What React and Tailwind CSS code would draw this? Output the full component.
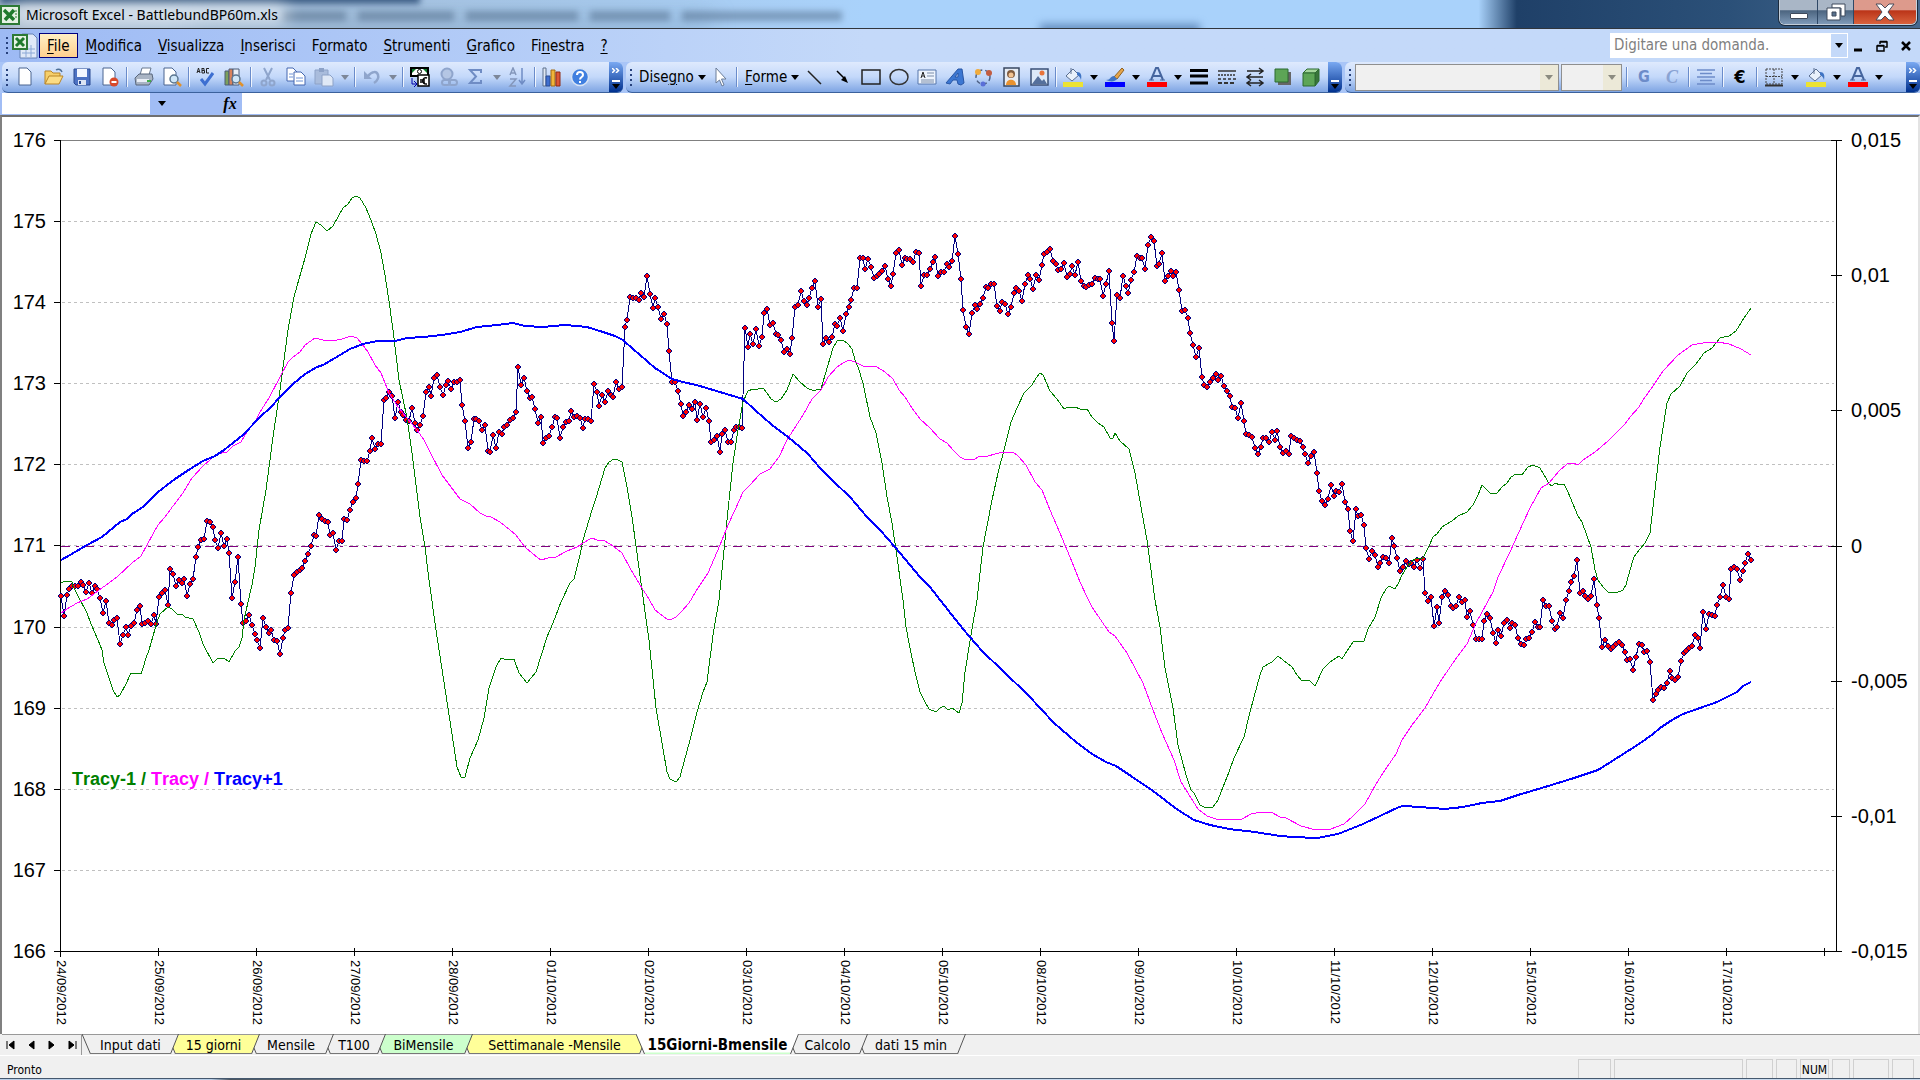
import clsx from 'clsx';

const MENU = [
  ['', 'F', 'ile'],
  ['', 'M', 'odifica'],
  ['', 'V', 'isualizza'],
  ['', 'I', 'nserisci'],
  ['F', 'o', 'rmato'],
  ['', 'S', 'trumenti'],
  ['', 'G', 'rafico'],
  ['Fi', 'n', 'estra'],
  ['', '?', ''],
];

const SHEETS = [
  { name: 'Input dati', width: 'w-[97px]', fill: '#f0f0f0' },
  { name: '15 giorni', width: 'w-[93px]', fill: '#ffff99' },
  { name: 'Mensile', width: 'w-[86px]', fill: '#f0f0f0' },
  { name: 'T100', width: 'w-[64px]', fill: '#f0f0f0' },
  { name: 'BiMensile', width: 'w-[99px]', fill: '#ccffcc' },
  { name: 'Settimanale -Mensile', width: 'w-[187px]', fill: '#ffff99' },
  { name: '15Giorni-Bmensile', width: 'w-[163px]', fill: '#ffffff', active: true },
  { name: 'Calcolo', width: 'w-[81px]', fill: '#f0f0f0' },
  { name: 'dati 15 min', width: 'w-[110px]', fill: '#f0f0f0' },
];

const DATES = [
  '24/09/2012', '25/09/2012', '26/09/2012', '27/09/2012', '28/09/2012', '01/10/2012',
  '02/10/2012', '03/10/2012', '04/10/2012', '05/10/2012', '08/10/2012', '09/10/2012',
  '10/10/2012', '11/10/2012', '12/10/2012', '15/10/2012', '16/10/2012', '17/10/2012',
];

// rows of the left scale, 176 down to 166
const LEVELS = [140, 221, 302, 383, 464, 545, 627, 708, 789, 870, 951];

const RIGHT_LABELS = ['0,015', '0,01', '0,005', '0', '-0,005', '-0,01', '-0,015'];

// hourly closes, evenly spaced between from and to
const PRICE = [
  {
    from: 61,
    to: 437,
    y: [
      596, 616, 595, 589, 586, 586, 586, 582, 585, 592, 583, 593, 586, 589, 598, 613, 601, 623, 625, 620, 618, 644, 635, 627, 635,
      626, 623, 610, 606, 624, 623, 621, 624, 615, 624, 597, 593, 590, 605, 569, 574, 586, 580, 583, 579, 596, 584, 579, 557, 547,
      540, 539, 521, 522, 527, 540, 548, 533, 546, 539, 553, 598, 582, 557, 604, 623, 621, 615, 625, 634, 640, 648, 618, 627, 633,
      630, 640, 641, 654, 638, 630, 628, 593, 575, 572, 570, 568, 561, 554, 546, 535, 536, 515, 519, 521, 522, 535, 533, 550, 541,
      541, 519, 520, 510, 502, 498, 484, 460, 461, 461, 451, 438, 449, 444, 444, 400, 398, 392, 396, 418, 402, 412, 415, 420, 421,
      408, 423, 430, 425, 416, 392, 387, 396, 378, 375,
    ],
  },
  {
    from: 440,
    to: 798,
    y: [
      387, 395, 385, 381, 389, 382, 382, 380, 405, 421, 448, 442, 419, 419, 421, 430, 425, 451, 452, 435, 448, 432, 434, 427, 425,
      420, 418, 412, 367, 385, 378, 391, 398, 397, 409, 423, 417, 443, 438, 436, 427, 417, 418, 438, 427, 422, 421, 411, 417, 416,
      418, 428, 419, 419, 421, 384, 392, 406, 395, 402, 391, 395, 397, 382, 389, 387, 327, 320, 297, 298, 298, 300, 293, 297, 276,
      294, 308, 298, 307, 319, 314, 324, 351, 382, 382, 391, 404, 416, 412, 405, 409, 402, 420, 404, 417, 408, 421, 442, 440, 436,
      452, 434, 430, 442, 442, 430, 427, 427, 428, 328, 347, 334, 344, 329, 346, 337, 313, 309, 325, 323, 334, 335, 340, 352, 349,
      354, 338, 307, 305,
    ],
  },
  {
    from: 801,
    to: 1148,
    y: [
      291, 301, 305, 298, 288, 281, 307, 299, 344, 338, 342, 337, 324, 326, 318, 331, 314, 307, 300, 288, 288, 258, 258, 269, 259,
      267, 278, 276, 274, 271, 266, 279, 286, 274, 253, 250, 265, 258, 259, 259, 262, 252, 253, 286, 275, 275, 269, 262, 257, 276,
      272, 272, 264, 267, 261, 236, 254, 279, 310, 327, 334, 313, 305, 309, 304, 298, 287, 288, 284, 284, 306, 311, 302, 304, 314,
      307, 293, 288, 291, 301, 284, 275, 279, 289, 275, 280, 265, 254, 252, 249, 261, 264, 270, 269, 263, 277, 274, 266, 275, 262,
      281, 286, 287, 285, 284, 278, 279, 279, 296, 284, 271, 323, 341, 295, 298, 276, 286, 293, 280, 272, 256, 258, 258, 269, 245,
    ],
  },
  {
    from: 1151,
    to: 1356,
    y: [
      237, 241, 266, 264, 253, 281, 276, 271, 276, 272, 290, 311, 310, 318, 333, 345, 357, 348, 377, 385, 387, 382, 378, 374, 380,
      376, 386, 391, 396, 407, 408, 418, 403, 421, 434, 435, 437, 448, 454, 447, 438, 438, 442, 432, 440, 431, 447, 453, 451, 454,
      436, 438, 440, 441, 447, 454, 463, 456, 452, 473, 491, 501, 505, 499, 485, 496, 491, 492, 484, 502, 509, 531, 541, 509,
    ],
  },
  {
    from: 1358,
    to: 1751,
    y: [
      516, 515, 525, 548, 559, 551, 555, 567, 563, 557, 558, 563, 538, 546, 558, 571, 567, 561, 564, 563, 567, 560, 568, 559, 593,
      601, 597, 626, 607, 623, 597, 591, 595, 606, 608, 606, 597, 602, 600, 617, 611, 625, 639, 639, 639, 621, 614, 618, 633, 643,
      630, 636, 623, 620, 628, 623, 625, 638, 644, 645, 639, 638, 632, 622, 627, 627, 600, 606, 606, 621, 629, 627, 613, 618, 600,
      591, 582, 576, 560, 593, 591, 596, 599, 596, 579, 605, 618, 647, 640, 646, 649, 647, 644, 642, 645, 652, 660, 659, 670, 657,
      644, 645, 652, 651, 662, 700, 694, 690, 687, 688, 683, 671, 678, 680, 677, 661, 653, 651, 648, 646, 635, 638, 648, 612, 629,
      614, 615, 616, 605, 597, 585, 597, 599, 569, 567, 569, 580, 571, 563, 554, 560,
    ],
  },
];

const CLOSES = PRICE.flatMap(({ from, to, y }) =>
  y.map((value, i) => [Math.round(from + ((to - from) * i) / (y.length - 1)), value])
);

const TRACY_MINUS =
  '61,583 65,581 72,582 73,586 78,596 87,613 91,624 98,640 102,650 104,663 108,675 113,690 117,697 120,695 126,684 131,673 141,674 143,668 146,658 149,650 157,622 160,614 168,607 172,609 177,614 182,614 185,617 193,619 199,632 203,644 213,663 218,658 224,658 229,662 235,651 239,647 242,638 244,620 248,602 252,585 255,567 259,530 266,490 273,437 280,390 288,330 294,297 299,279 305,258 311,234 316,222 321,225 327,231 333,226 343,208 348,204 352,198 356,196 360,198 366,208 371,220 376,234 381,253 385,275 389,301 393,330 399,380 407,418 412,453 420,517 425,547 429,580 436,630 448,708 457,767 461,777 465,777 470,758 478,740 484,718 489,688 496,667 501,658 507,660 514,659 519,673 527,683 536,672 547,637 553,623 561,602 570,583 574,579 580,555 583,540 592,510 596,498 605,468 609,462 614,459 618,460 622,462 627,487 632,517 637,553 641,583 649,640 656,708 667,772 670,779 676,782 680,777 684,762 690,740 697,712 703,692 707,682 713,635 719,600 723,560 728,510 733,463 738,430 743,402 748,391 753,389 758,389 763,388 767,393 771,399 776,402 781,399 787,390 793,374 800,382 807,388 814,391 818,389 821,389 825,375 828,365 833,348 837,341 843,340 848,344 852,349 855,360 858,367 863,383 870,417 876,433 882,463 887,497 892,523 896,550 903,600 906,627 910,648 915,672 920,692 924,700 929,709 936,712 940,708 944,706 948,710 952,708 959,713 962,703 965,672 971,635 977,600 983,547 992,500 998,473 1004,450 1011,422 1017,408 1024,393 1032,385 1036,378 1040,373 1043,375 1050,391 1057,399 1064,409 1068,407 1075,407 1080,409 1087,409 1092,417 1098,423 1104,427 1110,438 1113,438 1115,433 1120,441 1129,449 1135,473 1141,507 1147,540 1155,600 1160,627 1165,668 1173,708 1178,745 1186,775 1191,790 1194,793 1200,805 1204,807 1213,807 1218,800 1223,787 1229,772 1234,758 1244,737 1250,712 1260,675 1263,667 1272,662 1278,656 1283,660 1292,667 1297,675 1302,681 1309,680 1315,686 1323,669 1330,662 1339,656 1342,659 1347,651 1353,642 1364,641 1368,629 1375,617 1381,598 1386,589 1389,586 1395,589 1398,584 1402,575 1407,567 1412,561 1417,558 1423,558 1429,546 1433,537 1437,534 1442,527 1452,521 1458,516 1467,512 1473,505 1478,495 1482,485 1490,493 1497,493 1502,487 1507,483 1511,477 1516,474 1522,475 1528,467 1533,465 1540,468 1547,480 1549,484 1552,486 1555,483 1560,485 1564,484 1568,492 1578,516 1582,522 1591,547 1595,570 1598,580 1603,587 1608,592 1616,593 1623,590 1626,585 1630,570 1634,557 1640,549 1645,543 1650,533 1655,490 1660,447 1667,403 1671,394 1680,386 1687,373 1696,364 1704,353 1712,348 1720,338 1729,336 1736,331 1744,318 1751,308';

const TRACY =
  '61,613 67,609 77,603 87,599 102,588 117,577 132,563 141,556 148,543 158,525 165,517 173,506 183,493 192,478 203,466 217,454 227,452 233,446 241,442 248,430 255,422 260,412 269,398 280,377 288,362 293,357 300,352 305,345 315,338 323,340 333,341 342,339 351,336 357,338 362,344 368,352 375,365 381,373 389,393 398,407 407,418 417,430 424,440 430,452 442,475 451,487 460,499 470,504 480,513 486,516 491,517 500,522 510,530 516,535 525,547 533,554 541,560 548,558 556,557 567,551 577,547 583,543 592,538 597,540 605,541 613,546 622,553 630,568 640,585 649,599 655,610 667,619 672,619 676,617 681,612 689,603 698,588 708,573 720,545 728,525 735,510 743,492 750,485 760,474 770,469 779,457 787,440 803,415 812,399 821,390 828,377 837,367 843,363 849,360 855,362 863,366 877,367 885,372 893,379 899,390 905,397 912,408 920,419 930,428 940,439 947,443 953,450 960,457 964,459 975,459 980,456 988,456 995,454 1003,452 1013,452 1018,456 1026,465 1035,482 1042,490 1050,510 1060,533 1070,557 1080,582 1088,599 1092,607 1109,632 1115,636 1127,653 1143,683 1153,710 1162,733 1174,760 1181,782 1191,798 1198,809 1207,816 1216,819 1229,819 1242,819 1251,814 1261,812 1271,812 1280,817 1286,818 1301,826 1316,830 1331,829 1344,824 1353,816 1365,804 1376,784 1385,770 1396,754 1402,740 1412,725 1425,708 1440,682 1457,657 1467,644 1476,623 1493,592 1498,577 1510,552 1523,523 1530,508 1541,488 1549,483 1559,471 1567,464 1573,463 1578,465 1583,460 1595,452 1608,441 1625,424 1630,417 1639,407 1643,400 1653,386 1663,371 1678,355 1692,345 1708,342 1718,342 1729,344 1741,349 1751,355';

const TRACY_PLUS =
  '61,560 70,555 87,545 102,537 120,522 127,519 132,514 143,507 158,492 175,479 190,469 203,461 215,456 224,450 243,435 260,417 270,408 280,397 293,384 305,374 317,367 323,365 335,358 350,349 363,344 377,341 395,341 407,338 423,337 442,335 460,332 477,327 497,325 513,323 525,326 542,327 565,325 587,327 603,332 615,336 623,340 633,349 640,355 655,368 672,379 683,382 700,386 723,393 743,399 755,410 772,425 788,437 800,447 808,454 820,468 833,481 850,497 867,517 880,530 895,547 905,559 920,577 930,587 948,610 963,629 982,651 1003,671 1028,695 1054,723 1076,742 1092,754 1106,762 1116,766 1128,774 1153,791 1178,810 1194,820 1210,825 1229,829 1255,832 1280,836 1293,837 1317,838 1338,834 1363,824 1399,807 1403,806 1420,807 1445,809 1463,807 1482,803 1500,801 1518,795 1545,787 1574,778 1598,770 1628,751 1642,742 1653,734 1660,728 1672,720 1683,714 1700,708 1717,702 1725,698 1737,692 1743,686 1751,682';

function Chart() {
  const tickX = (i) => Math.floor(60 + i * 98.05);

  return (
    <svg viewBox="2 117 1916 917" className="block h-auto w-full" fontFamily="'Liberation Sans', Arial, sans-serif" role="img" aria-label="BattlebundBP60m">
      <defs>
        <g id="marker" shapeRendering="crispEdges">
          <path d="M-1-3h2v1h1v1h1v2h-1v1h-1v1h-2v-1h-1v-1h-1v-2h1v-1h1z" fill="#000080" />
          <path d="M-1-2h2v1h1v2h-1v1h-2v-1h-1v-2h1z" fill="#ff0000" />
        </g>
      </defs>
      <g shapeRendering="crispEdges" fill="none">
        <path d="M61 140.500H1837" stroke="#808080" />
        {LEVELS.slice(1, 10).map((y) => (
          <path key={y} d={`M62 ${y + 0.5}H1834`} stroke="#c0c0c0" strokeDasharray="3 3" />
        ))}
        <path d="M61 546.500H1834" stroke="#800080" strokeDasharray="9 6 3 6" />
        <path d="M60.500 140V957M1836.500 140V952M54 951.500H1842" stroke="#000" />
        {LEVELS.map((y) => (
          <path key={y} d={`M54 ${y + 0.5}H61`} stroke="#000" />
        ))}
        {RIGHT_LABELS.map((label, i) => (
          <path key={label} d={`M1831 ${140.5 + Math.round(i * 135.2)}H1842`} stroke="#000" />
        ))}
        {Array.from({ length: 19 }, (_, i) => (
          <path key={i} d={`M${tickX(i) + 0.5} 948V956`} stroke="#000" />
        ))}
        <polyline points={CLOSES.map((p) => p.join(',')).join(' ')} stroke="#000080" />
      </g>
      {CLOSES.map(([x, y]) => (
        <use key={x} href="#marker" x={x} y={y} />
      ))}
      <g shapeRendering="crispEdges" fill="none">
        <polyline points={TRACY_MINUS} stroke="#008000" />
        <polyline points={TRACY} stroke="#ff00ff" />
        <polyline points={TRACY_PLUS} stroke="#0000ff" strokeWidth="2" />
      </g>
      <g fontSize="20" fill="#000">
        {LEVELS.map((y, i) => (
          <text key={y} x="46" y={y + 7} textAnchor="end">{176 - i}</text>
        ))}
        {RIGHT_LABELS.map((label, i) => (
          <text key={label} x="1851" y={147 + Math.round(i * 135.2)}>{label}</text>
        ))}
      </g>
      <g fontSize="13" fill="#000">
        {DATES.map((date, i) => (
          <text key={date} transform={`translate(${tickX(i) - 3} 960) rotate(90)`}>{date}</text>
        ))}
      </g>
      <text x="72" y="785" fontSize="18" fontWeight="bold" className="[font-kerning:none]">
        <tspan fill="#008000">Tracy-1 / </tspan>
        <tspan fill="#ff00ff">Tracy / </tspan>
        <tspan fill="#0000ff">Tracy+1</tspan>
      </text>
    </svg>
  );
}

const Page = ({ x = 3, y = 1, w = 12, h = 17, stroke = '#4a6590' }) => (
  <path d={`M${x} ${y}h${w - 4}l4 4v${h - 4}h-${w}z`} fill="#fff" stroke={stroke} />
);

const Lens = () => (
  <>
    <circle cx="12" cy="12" r="4" fill="#cfe6f7" stroke="#5b7690" strokeWidth="1.5" />
    <path d="m15 15 4 4" stroke="#e0912c" strokeWidth="2.5" />
  </>
);

const Bucket = () => (
  <>
    <path d="m3 9 7-7 6 6-7 6z" fill="#e9f1fb" stroke="#5b6f90" />
    <path d="M8 1v6" stroke="#5b6f90" />
    <path d="M14 5c4 0 5 3 4 8-1-3-2-4-4-5z" fill="#3f74c4" />
    <path d="M0 15h20v5H0z" fill="#ece233" />
  </>
);

const FontA = () => (
  <>
    <path d="M4 13 9 1h2l5 12M6 9h8" stroke="#45659e" strokeWidth="2" fill="none" />
    <path d="M2 13h5M13 13h5" stroke="#45659e" />
    <path d="M0 15h20v5H0z" fill="#f00" />
  </>
);

const ICONS = {
  newDoc: <Page />,
  open: (
    <>
      <path d="M1 17V4h6l2 2h7v4" fill="#f6cf6a" stroke="#b98527" />
      <path d="M1 17 5 9h14l-4 8z" fill="#fbdc84" stroke="#b98527" />
      <path d="M12 3c3-2 5 0 6 2" stroke="#4e7097" fill="none" strokeWidth="1.5" />
    </>
  ),
  save: (
    <>
      <path d="M2 2h16v16H4l-2-2z" fill="#4d72c3" stroke="#2a4a92" />
      <path d="M5 2h10v8H5z" fill="#f3f7ff" />
      <path d="M6 13h8v5H6z" fill="#dbe4f3" />
      <path d="M7 14h2v3H7z" fill="#2a4a92" />
    </>
  ),
  permission: (
    <>
      <Page />
      <circle cx="14" cy="15" r="4.500" fill="#d9492a" />
      <path d="M11.500 15h5" stroke="#fff" strokeWidth="1.800" />
    </>
  ),
  print: (
    <>
      <path d="M6 8 8 1h9l-2 7z" fill="#fff" stroke="#68788f" />
      <path d="m1 11 4-4h13l1 5-4 6H2z" fill="#a9b4c4" stroke="#59677c" />
      <path d="M3 12h12v3H3z" fill="#e9eef6" />
      <path d="M13 13h4v2h-4z" fill="#3fae49" />
    </>
  ),
  preview: (
    <>
      <Page x={2} />
      <Lens />
    </>
  ),
  spelling: (
    <>
      <path d="M1 6l1.500-5L4 6M1.500 4.500h2M6 1v5M6 1.500h2v2H6h2.500V6H6M13 1.500h-2.500V6H13" fill="none" stroke="#222" />
      <path d="m5 12 4 5 8-11" fill="none" stroke="#3d6fd1" strokeWidth="3" />
    </>
  ),
  research: (
    <>
      <path d="M1 4h4v14H1z" fill="#7ba05b" stroke="#4d5d77" />
      <path d="M5 2h4v16H5z" fill="#d9825b" stroke="#4d5d77" />
      <path d="M9 2h6v16H9z" fill="#e9eef6" stroke="#4d5d77" />
      <Lens />
    </>
  ),
  cut: (
    <g stroke="#8fa5cc" fill="none" strokeWidth="2">
      <path d="m6 1 6 12M14 1 8 13" />
      <circle cx="6" cy="16" r="2.500" />
      <circle cx="14" cy="16" r="2.500" />
    </g>
  ),
  copy: (
    <>
      <Page x={1} w={10} h={13} stroke="#4467b0" />
      <Page x={8} y={5} w={11} h={13} stroke="#4467b0" />
      <path d="M3 7h4M3 10h4M10 11h7M10 14h7" stroke="#6f93d6" />
    </>
  ),
  paste: (
    <>
      <path d="M1 3h13v14H1z" fill="#a9bcdc" stroke="#8da2c7" />
      <path d="M5 1h5v4H5z" fill="#8da2c7" />
      <path d="M8 8h8l3 3v8H8z" fill="#dfe8f6" stroke="#8da2c7" />
    </>
  ),
  undo: (
    <>
      <path d="M6 9c4-5 9-5 10-1 1 3-1 6-4 8" fill="none" stroke="#8fa5cc" strokeWidth="2.500" />
      <path d="M2 4v8h8z" fill="#8fa5cc" />
    </>
  ),
  euroConvert: (
    <>
      <path d="M1 1h17v8H1z" fill="#fff" stroke="#000" strokeWidth="2" />
      <path d="M2 2h4L2 6zM17 2h-4l4 4z" fill="#0a7a2a" />
      <circle cx="9.500" cy="4.500" r="2" fill="none" stroke="#000" />
      <path d="M8 8h11v11H8z" fill="#fff" stroke="#000" strokeWidth="1.500" />
      <path d="M17 11c-5-2-6 7 0 6M10 13h5M10 15h5" stroke="#000" fill="none" strokeWidth="1.500" />
      <path d="M2 11v6h4M4 14l3 3-3 3" stroke="#00a" fill="none" />
    </>
  ),
  link: (
    <g fill="none" stroke="#8fa5cc" strokeWidth="2">
      <circle cx="9" cy="7" r="5.500" fill="#b4c6e4" />
      <rect x="4" y="13" width="8" height="5" rx="2.500" />
      <rect x="11" y="13" width="8" height="5" rx="2.500" />
    </g>
  ),
  sum: <path d="M15 6V3H4l6 6.500L4 16h11v-3" fill="none" stroke="#6f8cc4" strokeWidth="2" />,
  sort: (
    <>
      <path d="m2 8 3-7 3 7M3 6h4M2 12h6l-6 7h6" fill="none" stroke="#8497bb" strokeWidth="1.500" />
      <path d="M14 1v16m-3-4 3 4 3-4" fill="none" stroke="#6f8cc4" strokeWidth="1.500" />
    </>
  ),
  chart: (
    <>
      <path d="M1 1h3v18H1z" fill="#dfe7f2" stroke="#5d708d" />
      <path d="M4 9h4v10H4z" fill="#3f6fd0" stroke="#284a92" />
      <path d="M9 3h4v16H9z" fill="#f0b53a" stroke="#a46a13" />
      <path d="M14 5h4v14h-4z" fill="#dd5637" stroke="#8d2a15" />
    </>
  ),
  help: (
    <>
      <circle cx="10" cy="10" r="8.500" fill="#3f7fe0" stroke="#d5e2f4" strokeWidth="1.500" />
      <path d="M7 8c0-4 6-4 6 0 0 2-3 2-3 4.500M10 14v2" fill="none" stroke="#fff" strokeWidth="2" />
    </>
  ),
  pointer: <path d="M6 1v15l3.500-3 2.500 6 2-1-2.500-6H16z" fill="#fff" stroke="#6a7c98" />,
  line: <path d="m3 4 13 13" stroke="#222" strokeWidth="1.500" />,
  arrow: (
    <>
      <path d="m4 4 7 7" stroke="#000" strokeWidth="1.500" />
      <path d="m15 16-7-3 4-4z" fill="#000" />
    </>
  ),
  rect: <path d="M1 3h18v14H1z" fill="none" stroke="#222" strokeWidth="1.500" />,
  oval: <ellipse cx="10" cy="10" rx="9" ry="7.500" fill="none" stroke="#333" strokeWidth="1.500" />,
  textBox: (
    <>
      <path d="M1 3h18v14H1z" fill="#eef4fd" stroke="#5776ab" />
      <path d="m4 11 2-6 2 6M5 9h2" fill="none" stroke="#222" />
      <path d="M10 6h7M10 9h7M4 13h13M4 15h13" stroke="#7b8ca8" />
    </>
  ),
  wordArt: <path d="m1 16 12-14h4l2 14-3 2-3-1-1-4H8l-3 4zM10 10h3V6z" fill="#3c77d2" fillRule="evenodd" stroke="#2956a5" />,
  diagram: (
    <>
      <circle cx="10" cy="10" r="7" fill="none" stroke="#4d6184" strokeWidth="1.500" strokeDasharray="4 3" />
      <circle cx="5" cy="5" r="3" fill="#f0ab3c" />
      <circle cx="16" cy="6" r="3" fill="#c25c40" />
      <circle cx="10" cy="17" r="2.500" fill="#5a6fd8" />
    </>
  ),
  clipArt: (
    <>
      <path d="M3 1h15v18H3z" fill="#e7ecf4" stroke="#3a4860" strokeWidth="1.500" />
      <circle cx="10" cy="7" r="4" fill="#805b3d" />
      <circle cx="10" cy="8" r="2.500" fill="#f3c391" />
      <path d="M5 18c0-7 10-7 10 0z" fill="#e9922f" />
    </>
  ),
  picture: (
    <>
      <path d="M2 2h17v16H2z" fill="#dce9f8" stroke="#3a4f75" strokeWidth="1.500" />
      <circle cx="13" cy="6" r="2.500" fill="#e8743a" />
      <path d="m3 17 6-8 4 5 2-2 3 5z" fill="#55709c" />
    </>
  ),
  fill: <Bucket />,
  lineColor: (
    <>
      <path d="m9 10 8-9 2 2-7 9z" fill="#e6a54a" stroke="#8f6120" />
      <path d="M1 13c5 0 4-4 8-4l3 3c-2 3-7 3-11 1z" fill="#3f74c4" />
      <path d="M0 15h20v5H0z" fill="#00f" />
    </>
  ),
  fontColor: <FontA />,
  lineStyle: <path d="M1 3.500h18M1 9h18M1 16h18" stroke="#000" strokeWidth="3" />,
  dashStyle: (
    <g stroke="#333" strokeWidth="1.500">
      <path d="M1 4h18" />
      <path d="M1 8h18" strokeDasharray="2 1" />
      <path d="M1 12h18" strokeDasharray="3 2" />
      <path d="M1 16h18" strokeDasharray="4 2" strokeWidth="2" />
    </g>
  ),
  arrowStyle: <path d="M2 4h15m-3-3 4 3-4 3M18 10H3m3-3-4 3 4 3M3 16h14m-3-3 4 3-4 3M6 13l-4 3 4 3" fill="none" stroke="#222" strokeWidth="1.500" />,
  shadow: (
    <>
      <path d="M5 5h13v13H5z" fill="#666" />
      <path d="M2 2h13v13H2z" fill="#5da556" stroke="#2c6b31" />
    </>
  ),
  cube: (
    <>
      <path d="m2 6 4-4h12l-4 4z" fill="#a4d69b" stroke="#2c6b31" />
      <path d="m14 6 4-4v12l-4 5z" fill="#38753a" stroke="#2c6b31" />
      <path d="M2 6h12v13H2z" fill="#5da556" stroke="#2c6b31" />
    </>
  ),
  center: <path d="M1 3h18M4 6.500h12M1 10h18M4 13.500h12M1 17h18" stroke="#6d8cc9" strokeWidth="1.500" />,
  borders: (
    <>
      <path d="M2 2h16v15H2zM10 2v15M2 9.500h16" fill="none" stroke="#444" strokeDasharray="2 1" />
      <path d="M1 18.500h18" stroke="#333" strokeWidth="2" />
    </>
  ),
};

function ToolButton({ icon, label }) {
  return (
    <button type="button" aria-label={label ?? icon} className="flex w-7 shrink-0 items-center justify-center">
      <svg viewBox="0 0 20 20" className="size-5">{ICONS[icon]}</svg>
    </button>
  );
}

function Triangle({ className }) {
  return (
    <svg viewBox="0 0 8 5" className={clsx('h-[5px] w-2 shrink-0', className)}>
      <path d="M0 0h8L4 5z" fill="currentColor" />
    </svg>
  );
}

function Drop({ disabled }) {
  return (
    <button type="button" aria-label="Altre opzioni" className="flex w-3.5 shrink-0 items-center justify-center">
      <Triangle className={disabled ? 'text-[#7d8798]' : 'text-black'} />
    </button>
  );
}

const Divider = () => <div className="mx-[2px] h-5 w-[2px] shrink-0 self-center border-l border-[#6a8ccb] bg-white/80" />;

function Grip() {
  return (
    <div className="flex w-2.5 shrink-0 flex-col items-center justify-center gap-[3px]">
      {[0, 1, 2, 3].map((i) => (
        <span key={i} className="size-[2px] bg-[#27417c]" />
      ))}
    </div>
  );
}

function Tools({ items }) {
  return items.map((item, i) => {
    if (item === '|') return <Divider key={i} />;
    if (item === 'v') return <Drop key={i} />;
    if (item === 'x') return <Drop key={i} disabled />;
    return <ToolButton key={i} icon={item} />;
  });
}

function Toolbar({ label, className, more = true, children }) {
  return (
    <div
      role="toolbar"
      aria-label={label}
      className={clsx('flex overflow-hidden rounded-md border-b border-[#3b619c] bg-linear-to-b from-[#dfeafd] via-[#c3d8fa] to-[#7fa5e3]', className)}
    >
      <Grip />
      {children}
      <button
        type="button"
        aria-label="Opzioni barra degli strumenti"
        className="ml-auto flex w-3.5 shrink-0 flex-col items-center justify-between bg-linear-to-b from-[#7aa9f2] to-[#00308f] pt-1.5 pb-[3px] text-white"
      >
        <svg viewBox="0 0 8 5" className="h-[5px] w-2">
          {more && <path d="m0 0 2.500 2.500L0 5M4 0l2.500 2.500L4 5" fill="none" stroke="#fff" strokeWidth="1.500" />}
        </svg>
        <span className="flex flex-col items-center gap-[2px]">
          <span className="h-[2px] w-2 bg-white" />
          <Triangle className="text-black" />
        </span>
      </button>
    </div>
  );
}

function DisabledSelect({ label, className }) {
  return (
    <div className={clsx('flex h-[27px] shrink-0 self-center border border-[#8f8f8f] bg-[#f0f0f0]', className)}>
      <select aria-label={label} disabled className="min-w-0 flex-1 appearance-none" />
      <span className="flex w-[18px] items-center justify-center bg-[#ece9d8]">
        <Triangle className="text-[#8b8b80]" />
      </span>
    </div>
  );
}

function ExcelLogo({ className }) {
  return (
    <svg viewBox="0 0 20 20" className={className}>
      <path d="M1 1h18v18H1z" fill="#e5f2e4" stroke="#2d7a35" strokeWidth="2" />
      <path d="m4 5 10 10M14 5 5 15" stroke="#1f7a2d" strokeWidth="3.500" />
      <path d="M15 6h2M15 9h2M15 12h2" stroke="#2d7a35" />
    </svg>
  );
}

function TitleBar() {
  return (
    <header className="relative flex h-[29px] overflow-hidden border-b border-[#30353c] bg-linear-to-r from-[#a5b8cc] from-0% via-[#a9d2fb] via-45% to-[#a9d2fb]">
      <div className="absolute inset-0 bg-[linear-gradient(90deg,transparent_77%,#1f4068_79%,#2b5078_90%,#46698f_100%)]" />
      <div className="absolute -top-2 left-0 h-3 w-[420px] bg-[#3e5f86] blur-[3px]" />
      <div className="absolute top-4 left-48 h-4 w-[520px] bg-[#6a8cb0]/40 blur-md" />
      <div className="absolute top-6 left-[1040px] h-3 w-40 bg-[#38629a]/60 blur-xs" />
      <div className="absolute top-[11px] left-[282px] flex h-2.5 gap-3 blur-[3px]">
        <span className="w-16 bg-[#4f6a88]/50" />
        <span className="w-24 bg-[#4f6a88]/50" />
        <span className="w-28 bg-[#4f6a88]/50" />
        <span className="w-20 bg-[#4f6a88]/50" />
        <span className="w-40 bg-[#4f6a88]/50" />
      </div>
      <div className="absolute top-1 left-3 h-5 w-[276px] rounded-full bg-white/60 blur-sm" />
      <div className="relative flex items-center gap-1.5 pt-px text-black">
        <ExcelLogo className="size-5" />
        <h1 className="font-['Noto_Sans',sans-serif] text-sm">Microsoft Excel - BattlebundBP60m.xls</h1>
      </div>
      <div className="relative mr-[3px] ml-auto flex h-[25px] overflow-hidden rounded-b-md border border-t-0 border-white/70 shadow-[0_0_0_1px_#1c2b3d]">
        <button type="button" aria-label="Riduci a icona" className="flex w-[38px] items-end justify-center border-r border-[#2f4866] bg-linear-to-b from-[#a9b6c6] from-40% via-[#4c6580] via-45% to-[#7f9ab8] pb-[5px]">
          <span className="h-[6px] w-[18px] rounded-[1px] border border-[#3e4a5c] bg-white" />
        </button>
        <button type="button" aria-label="Ripristina" className="flex w-9 items-center justify-center border-r border-[#2f4866] bg-linear-to-b from-[#a9b6c6] from-40% via-[#4c6580] via-45% to-[#7f9ab8]">
          <svg viewBox="0 0 20 18" className="h-[18px] w-5">
            <path d="M6 1h13v12h-4V5H6z" fill="#fff" stroke="#3e4a5c" />
            <path d="M1 5h13v12H1zM6 9v4h4V9z" fill="#fff" fillRule="evenodd" stroke="#3e4a5c" />
          </svg>
        </button>
        <button type="button" aria-label="Chiudi" className="flex w-[62px] items-center justify-center bg-linear-to-b from-[#dd9a8c] from-40% via-[#bb3418] via-45% to-[#d9613c]">
          <svg viewBox="0 0 20 18" className="h-[18px] w-5">
            <path d="M1 1h5l4 4 4-4h5l-6 8 6 8h-5l-4-4-4 4H1l6-8z" fill="#fff" stroke="#4b4b58" />
          </svg>
        </button>
      </div>
    </header>
  );
}

function MenuBar() {
  return (
    <div className="flex h-[33px] items-center bg-linear-to-r from-[#9dbaf4] to-[#c4d9f9] to-45% pl-[2px] text-[15px]">
      <Grip />
      <svg viewBox="0 0 26 26" className="mr-px size-[26px]">
        <path d="M10 1h11l4 4v20H8V14z" fill="#dfe9f8" stroke="#6683b5" />
        <path d="M10 20h13M10 16h13M14 12v12M19 12v12" stroke="#8ba8d6" />
        <path d="M1 2h14v14H1z" fill="#e5f2e4" stroke="#2d7a35" strokeWidth="2" />
        <path d="m4 5 8 8M12 5l-8 8" stroke="#1f7a2d" strokeWidth="3" />
      </svg>
      <nav className="flex">
        {MENU.map(([before, key, after], i) => (
          <button
            key={i}
            type="button"
            className={clsx('h-[25px] border px-[7px] pt-px', i === 0 ? 'border-[#000080] bg-linear-to-b from-[#ffefc4] to-[#ffd08e]' : 'border-transparent')}
          >
            {before}
            <span className="underline underline-offset-2">{key}</span>
            {after}
          </button>
        ))}
      </nav>
      <div className="ml-auto flex h-[25px] w-[238px] border border-white bg-white">
        <input type="text" aria-label="Digitare una domanda" placeholder="Digitare una domanda." className="min-w-0 flex-1 px-[3px] placeholder:text-[#808080]" />
        <button type="button" aria-label="Domande recenti" className="flex w-4 items-center justify-center bg-[#c4d9f9]">
          <Triangle />
        </button>
      </div>
      <div className="mr-2 ml-1 flex items-center gap-3">
        <button type="button" aria-label="Riduci cartella">
          <svg viewBox="0 0 12 12" className="size-3"><path d="M2 10h8" stroke="#000" strokeWidth="3" /></svg>
        </button>
        <button type="button" aria-label="Ripristina cartella">
          <svg viewBox="0 0 12 12" className="size-3"><path d="M4 4V2h7v5H9M1 6h7v5H1zM4 1.500h7M1 5.500h7" fill="none" stroke="#000" strokeWidth="1.500" /></svg>
        </button>
        <button type="button" aria-label="Chiudi cartella">
          <svg viewBox="0 0 12 12" className="size-3"><path d="m2 2 8 8M10 2l-8 8" stroke="#000" strokeWidth="2.500" /></svg>
        </button>
      </div>
    </div>
  );
}

function Toolbars() {
  return (
    <div className="flex h-[31px] items-stretch gap-[3px] bg-[#a9c5f7] pl-[2px] text-[15px]">
      <Toolbar label="Standard" className="w-[621px] shrink-0">
        <Tools
          items={[
            'newDoc', 'open', 'save', 'permission', '|', 'print', 'preview', '|', 'spelling', 'research', '|',
            'cut', 'copy', 'paste', 'x', '|', 'undo', 'x', '|', 'euroConvert', 'link', 'sum', 'x', 'sort', '|', 'chart', 'help',
          ]}
        />
      </Toolbar>
      <Toolbar label="Disegno" className="w-[716px] shrink-0" more={false}>
        <button type="button" className="flex w-[70px] shrink-0 items-center gap-1 pl-[3px]">
          <span>Dise<u className="underline-offset-2">g</u>no</span>
          <Triangle />
        </button>
        <Tools items={['pointer', '|']} />
        <button type="button" className="flex w-[61px] shrink-0 items-center gap-1 pl-[5px]">
          <span><u className="underline-offset-2">F</u>orme</span>
          <Triangle />
        </button>
        <Tools
          items={[
            'line', 'arrow', 'rect', 'oval', 'textBox', 'wordArt', 'diagram', 'clipArt', 'picture', '|', 'fill', 'v',
            'lineColor', 'v', 'fontColor', 'v', 'lineStyle', 'dashStyle', 'arrowStyle', 'shadow', 'cube',
          ]}
        />
      </Toolbar>
      <Toolbar label="Formattazione" className="min-w-0 flex-1">
        <DisabledSelect label="Tipo di carattere" className="mr-[2px] w-[204px]" />
        <DisabledSelect label="Dimensione carattere" className="mr-[2px] w-[61px]" />
        <Divider />
        <button type="button" aria-label="Grassetto" className="w-7 shrink-0 text-base font-bold text-[#6d8cc9]">G</button>
        <button type="button" aria-label="Corsivo" className="w-7 shrink-0 font-['Liberation_Serif',serif] text-lg font-bold text-[#8aa3d3] italic">C</button>
        <Tools items={['|', 'center', '|']} />
        <button type="button" aria-label="Euro" className="w-7 shrink-0 text-lg font-bold">€</button>
        <Tools items={['|', 'borders', 'v', 'fill', 'v', 'fontColor', 'v']} />
      </Toolbar>
    </div>
  );
}

function FormulaBar() {
  return (
    <div className="flex h-[22px] bg-[#a1bdf5] pb-px pl-[2px]">
      <input type="text" aria-label="Casella nome" className="w-[148px] bg-white" />
      <button type="button" aria-label="Elenco nomi" className="flex w-6 items-center justify-center">
        <Triangle />
      </button>
      <button type="button" aria-label="Inserisci funzione" className="ml-11 w-6 font-['Liberation_Serif',serif] text-base leading-5 font-bold italic">fx</button>
      <input type="text" aria-label="Barra della formula" className="min-w-0 flex-1 bg-white" />
    </div>
  );
}

const NAV = [
  ['Primo foglio', 'M3 2v8M10 2v8L5 6z'],
  ['Foglio precedente', 'M9 2v8L4 6z'],
  ['Foglio successivo', 'M4 2v8l5-4z'],
  ['Ultimo foglio', 'M10 2v8M3 2v8l5-4z'],
];

// left and right slopes keep their width, the middle stretches with the tab
function TabShape({ fill, active }) {
  const top = active ? fill : '#999';
  const bottom = active ? '#ccffcc' : '#777';
  return (
    <span className="absolute inset-0 flex">
      <svg viewBox="0 0 9 20" className="h-5 w-[9px] shrink-0">
        <path d="M0 0h9v20z" fill={fill} />
        <path d="M0 .5h9" stroke={top} />
        <path d="m0 0 8.500 20" stroke="#555" />
      </svg>
      <svg viewBox="0 0 10 20" preserveAspectRatio="none" className="h-5 min-w-0 flex-1">
        <path d="M0 0h10v20H0z" fill={fill} />
        <path d="M0 .5h10" stroke={top} />
        <path d="M0 19.500h10" stroke={bottom} strokeWidth={active ? 2 : 1} />
      </svg>
      <svg viewBox="0 0 9 20" className="h-5 w-[9px] shrink-0">
        <path d="M0 0h9L0 20z" fill={fill} />
        <path d="M0 .5h9" stroke={top} />
        <path d="M8.500 0 .5 20" stroke="#555" />
      </svg>
    </span>
  );
}

function SheetTabs() {
  return (
    <div className="flex h-[22px] border-b border-white bg-[#f0f0f0] pl-[2px]">
      <div className="flex w-20 items-center justify-between border-t border-r border-[#999] pr-[3px] pl-[2px]">
        {NAV.map(([label, d]) => (
          <button key={label} type="button" aria-label={label}>
            <svg viewBox="0 0 12 12" className="size-3"><path d={d} fill="#000" stroke="#000" /></svg>
          </button>
        ))}
      </div>
      <div className="isolate flex flex-1 border-t border-[#999]">
        {SHEETS.map(({ name, width, fill, active }, i) => (
          <button
            key={name}
            type="button"
            className={clsx('relative -mt-px h-[21px] shrink-0', width, i > 0 && '-ml-3')}
            style={{ zIndex: active ? 20 : SHEETS.length - i }}
          >
            <TabShape fill={fill} active={active} />
            <span className={clsx('relative block leading-5 whitespace-nowrap', active ? 'text-[15px] font-bold' : 'text-sm')}>{name}</span>
          </button>
        ))}
      </div>
    </div>
  );
}

function StatusBar() {
  const cells = ['w-[33px]', 'w-[129px]', 'w-[27px]', 'w-[21px]', 'w-[29px]', 'w-[18px]', 'w-9', 'w-[22px]'];
  return (
    <footer className="flex h-[22px] items-end gap-[3px] bg-[#f0f0f0] pr-1.5 pl-[7px] text-xs">
      <span className="mr-auto leading-4">Pronto</span>
      {cells.map((width, i) => (
        <span key={i} className={clsx('flex h-[19px] shrink-0 justify-center border border-b-0 border-[#d0d0d0] leading-5', width)}>
          {i === 4 && 'NUM'}
        </span>
      ))}
    </footer>
  );
}

export default function App() {
  return (
    <div className="flex min-h-screen flex-col bg-white font-['DejaVu_Sans_Condensed','Noto_Sans',sans-serif] text-black">
      <TitleBar />
      <MenuBar />
      <Toolbars />
      <FormulaBar />
      <main className="flex-1 border-x-2 border-t-2 border-t-[#707070] border-r-[#e3e3e3] border-l-[#808080]">
        <Chart />
      </main>
      <SheetTabs />
      <StatusBar />
      <div className="h-[2px] border-t border-[#45586e] bg-linear-to-r from-[#b9cfe8] from-11% via-[#4a5560] via-12% to-[#c8daee] to-37%" />
    </div>
  );
}
